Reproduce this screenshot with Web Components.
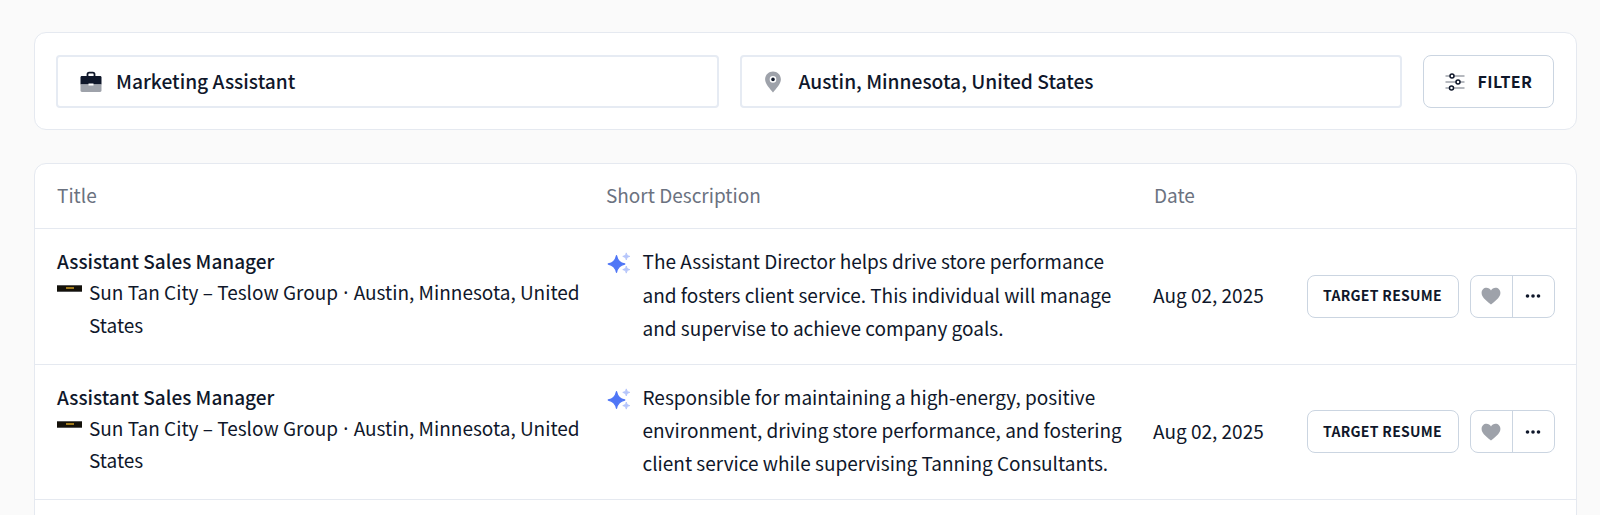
<!DOCTYPE html>
<html lang="en">
<head>
<meta charset="utf-8">
<title>Jobs</title>
<style>
  html, body { margin: 0; height: 515px; overflow: hidden; background: #fafafa; }
  body { font-family: "Noto Sans CJK KR", "Noto Sans", sans-serif; color: #0f172a; }
  job-page { height: 515px; }
</style>
</head>
<body>
<job-page>
  <search-bar>
    <search-field kind="case">Marketing Assistant</search-field>
    <search-field kind="pin">Austin, Minnesota, United States</search-field>
    <filter-button>FILTER</filter-button>
  </search-bar>
  <job-table>
    <job-row title="Assistant Sales Manager" company="Sun Tan City – Teslow Group" place="Austin, Minnesota, United States" date="Aug 02, 2025">The Assistant Director helps drive store performance and fosters client service. This individual will manage and supervise to achieve company goals.</job-row>
    <job-row title="Assistant Sales Manager" company="Sun Tan City – Teslow Group" place="Austin, Minnesota, United States" date="Aug 02, 2025">Responsible for maintaining a high-energy, positive environment, driving store performance, and fostering client service while supervising Tanning Consultants.</job-row>
  </job-table>
</job-page>

<script>
const ICONS = {
  case: `<svg width="22" height="22" viewBox="0 0 22 22">
    <path d="M7.5 5V3.200C7.500 2.300 8.200 1.600 9.100 1.600h3.800c.9 0 1.600.7 1.600 1.600V5" fill="none" stroke="#0f172a" stroke-width="1.800"/>
    <path d="M0.500 6.400C0.500 5.600 1.100 5 1.900 5h18.200c.8 0 1.400.6 1.400 1.400V13.500H0.500z" fill="#0f172a"/>
    <path d="M0.500 13.500h21v6.100c0 .8-.6 1.400-1.400 1.400H1.900c-.8 0-1.400-.6-1.400-1.400z" fill="#9ea2aa"/>
    <rect x="8.500" y="12.500" width="5" height="2" fill="#fff"/>
  </svg>`,
  pin: `<svg width="21" height="22" viewBox="2 0 21 22">
    <path fill-rule="evenodd" d="M11 .5c4.200 0 7.900 3.200 7.900 7.800 0 4.700-4.800 9.400-7.900 13.200C7.900 17.700 3.100 13 3.100 8.300 3.100 3.700 6.800.5 11 .5zm0 4.600a3.300 3.300 0 1 0 0 6.600 3.300 3.300 0 0 0 0-6.600z" fill="#9ea2aa"/>
    <circle cx="11" cy="8.400" r="1.800" fill="#0f172a"/>
  </svg>`,
  sliders: `<svg width="20" height="18" viewBox="0 0 20 18" fill="none">
    <path d="M.5 3h19M.5 9h19M.5 15h19" stroke="#9ea2aa" stroke-width="1.600"/>
    <circle cx="7" cy="3" r="2" fill="#fff" stroke="#0f172a" stroke-width="1.500"/>
    <circle cx="13" cy="9" r="2" fill="#fff" stroke="#0f172a" stroke-width="1.500"/>
    <circle cx="6.500" cy="15" r="2" fill="#fff" stroke="#0f172a" stroke-width="1.500"/>
  </svg>`,
  spark: `<svg width="26" height="24" viewBox="0 0 26 24">
    <path d="M9.500 3.800C10.500 8.800 12.500 11 17.700 12 12.500 13 10.500 15.200 9.500 20.200 8.500 15.200 6.500 13 1.300 12 6.500 11 8.500 8.800 9.500 3.800z" fill="#4f76f6" stroke="#4f76f6" stroke-width="1.400" stroke-linejoin="round"/>
    <path d="M19.300.9c.6 2.300 1.200 2.900 3.500 3.500-2.300.6-2.900 1.200-3.500 3.500-.6-2.300-1.200-2.900-3.500-3.500 2.300-.6 2.900-1.200 3.500-3.500zM19.300 14.100c.6 2.300 1.200 2.900 3.500 3.500-2.300.6-2.900 1.200-3.500 3.500-.6-2.300-1.200-2.900-3.500-3.500 2.300-.6 2.900-1.200 3.500-3.500z" fill="#b6c6fb" stroke="#b6c6fb" stroke-width="1" stroke-linejoin="round"/>
  </svg>`,
  heart: `<svg width="20" height="18" viewBox="0 0 20 18"><path d="M10 17.500C3.500 12.500.6 9.600.6 5.800.6 2.900 2.800.8 5.500.8c1.900 0 3.500 1 4.500 2.700C11 1.800 12.600.8 14.500.8c2.700 0 4.900 2.100 4.900 5 0 3.800-2.900 6.700-9.400 11.700z" fill="#9ea2aa"/></svg>`,
  dots: `<svg width="16" height="4" viewBox="0 0 16 4" fill="#0f172a"><circle cx="2.500" cy="2" r="1.800"/><circle cx="8" cy="2" r="1.800"/><circle cx="13.500" cy="2" r="1.800"/></svg>`
};

class JobPage extends HTMLElement {
  constructor() {
    super();
    this.attachShadow({ mode: 'open' });
    this.shadowRoot.innerHTML = `
      <style>
        :host { display: flex; flex-direction: column; gap: 33px; box-sizing: border-box; padding: 32px 23px 0 34px; overflow: hidden; }
      </style>
      <slot></slot>`;
  }
}

class SearchBar extends HTMLElement {
  constructor() {
    super();
    this.attachShadow({ mode: 'open' });
    this.shadowRoot.innerHTML = `
      <style>
        :host { display: flex; gap: 21px; box-sizing: border-box; height: 98px; padding: 22px 22px 22px 21px; background: #fff; border: 1px solid #e5e9f0; border-radius: 12px; flex: none; }
      </style>
      <slot></slot>`;
  }
}

class SearchField extends HTMLElement {
  constructor() {
    super();
    this.attachShadow({ mode: 'open' });
    this.shadowRoot.innerHTML = `
      <style>
        :host { display: flex; flex: 1; align-items: center; gap: 14px; box-sizing: border-box; height: 53px; padding: 0 22px; background: #fff; border: 2px solid #e6ebf3; border-radius: 4px; font-size: 19.2px; font-weight: 500; }
        svg { display: block; }
        span { padding-bottom: 2px; }
      </style>
      ${ICONS[this.getAttribute('kind')]}
      <span><slot></slot></span>`;
  }
}

class FilterButton extends HTMLElement {
  constructor() {
    super();
    this.attachShadow({ mode: 'open' });
    this.shadowRoot.innerHTML = `
      <style>
        :host { display: flex; flex: none; align-items: center; justify-content: center; gap: 13px; box-sizing: border-box; width: 131px; height: 53px; background: #fff; border: 1px solid #cbd5e1; border-radius: 8px; font-size: 16px; font-weight: 700; letter-spacing: .4px; }
        svg { display: block; }
        span { padding-bottom: 2px; }
      </style>
      ${ICONS.sliders}
      <span><slot></slot></span>`;
  }
}

class JobTable extends HTMLElement {
  constructor() {
    super();
    this.attachShadow({ mode: 'open' });
    this.shadowRoot.innerHTML = `
      <style>
        :host { display: block; flex: none; background: #fff; border: 1px solid #e5e9f0; border-radius: 12px 12px 0 0; padding-bottom: 40px; }
        .head { display: grid; grid-template-columns: 549px 548px 1fr; align-items: center; height: 64px; padding: 0 22px; border-bottom: 1px solid #e5e9f0; color: #6b7280; font-size: 19px; }
        .head span { padding-bottom: 3px; }
      </style>
      <div class="head"><span>Title</span><span>Short Description</span><span>Date</span></div>
      <slot></slot>`;
  }
}

class JobRow extends HTMLElement {
  constructor() {
    super();
    this.attachShadow({ mode: 'open' });
    // the last word of the place wraps, keep it out of the span
    const place = this.getAttribute('place');
    const cut = place.lastIndexOf(' ');
    this.shadowRoot.innerHTML = `
      <style>
        :host { display: grid; grid-template-columns: 549px 548px 1fr; align-items: center; box-sizing: border-box; height: 135.5px; padding: 0 21.5px 0 22px; border-bottom: 1px solid #e5e9f0; font-size: 19px; line-height: 32.5px; }
        .who { padding-bottom: 7px; }
        .title { font-weight: 500; line-height: 31px; padding-top: 1px; }
        .company { display: flex; }
        .dot { font-family: "Noto Sans", sans-serif; line-height: 0; margin: 0 1px; }
        .logo { flex: none; width: 25px; height: 7px; margin: 9px 7px 0 0; background: #14110a; border-top: 1px solid #555; border-bottom: 1px solid #555; box-sizing: border-box; }
        .logo i { display: block; width: 8px; height: 2px; margin: 1px auto 0; background: #a07a1c; }
        .desc { display: flex; gap: 9.5px; padding: 0 22px 4px 0; line-height: 33.2px; }
        .desc svg { flex: none; margin: 8px 0 0 1px; }
        .end { display: flex; align-items: center; gap: 11px; }
        .date { margin: 0 auto 0 -1px; padding-bottom: 2px; }
        .target, .group { box-sizing: border-box; height: 43px; background: #fff; border: 1px solid #cbd5e1; border-radius: 8px; }
        .target { display: flex; align-items: center; justify-content: center; width: 152px; font-size: 14px; font-weight: 700; letter-spacing: .3px; }
        .target span { padding-bottom: 2px; }
        .group { display: flex; width: 85px; }
        .group span { display: flex; align-items: center; justify-content: center; flex: 1; }
        .group span + span { border-left: 1px solid #cbd5e1; }
      </style>
      <div class="who">
        <div class="title">${this.getAttribute('title')}</div>
        <div class="company"><div class="logo"><i></i></div><div><span>${this.getAttribute('company')}</span> <span class="dot">·</span> <span>${place.slice(0, cut)}</span> <span>${place.slice(cut + 1)}</span></div></div>
      </div>
      <div class="desc">${ICONS.spark}<div><slot></slot></div></div>
      <div class="end">
        <span class="date">${this.getAttribute('date')}</span>
        <div class="target"><span>TARGET RESUME</span></div>
        <div class="group"><span>${ICONS.heart}</span><span>${ICONS.dots}</span></div>
      </div>`;
  }
}

customElements.define('job-page', JobPage);
customElements.define('search-bar', SearchBar);
customElements.define('search-field', SearchField);
customElements.define('filter-button', FilterButton);
customElements.define('job-table', JobTable);
customElements.define('job-row', JobRow);
</script>
</body>
</html>
